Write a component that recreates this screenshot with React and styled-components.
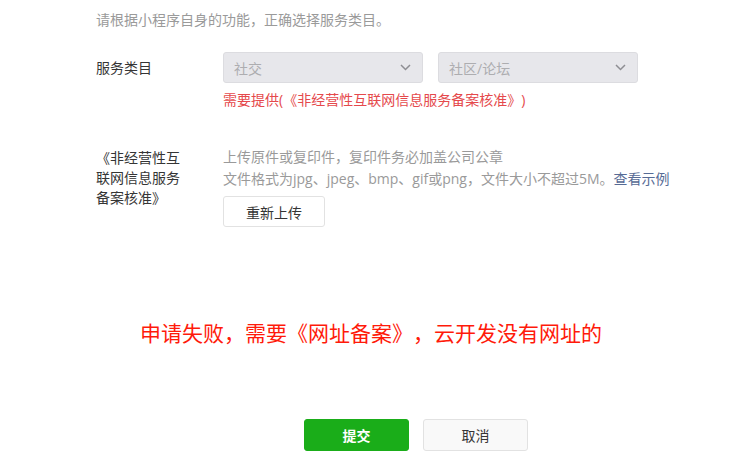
import React from "react";
import styled, { createGlobalStyle } from "styled-components";

const Global = createGlobalStyle`
  html, body { margin: 0; padding: 0; background: #fff; }
  body {
    font-family: "Open Sans", "Noto Sans CJK SC", sans-serif;
    font-size: 14px;
    color: #353535;
    text-spacing-trim: space-all;
  }
`;

const Page = styled.div`
  width: 742px;
  height: 463px;
  overflow: hidden;
  box-sizing: border-box;
  padding-top: 10px;
`;

const Form = styled.div`
  padding-left: 96px;
`;

const Intro = styled.p`
  margin: 0;
  font-size: 14px;
  line-height: 20px;
  color: #9a9a9a;
`;

const Row = styled.div`
  display: grid;
  grid-template-columns: 127px 1fr;
  margin-top: ${(p) => p.$top}px;
`;

const Label = styled.div`
  width: 90px;
  font-size: 14px;
  line-height: ${(p) => p.$lh}px;
  padding-top: ${(p) => p.$pt || 0}px;
  color: #353535;
`;

const Selects = styled.div`
  display: flex;
  gap: 15px;
`;

const Select = styled.div`
  box-sizing: border-box;
  width: 200px;
  height: 31px;
  display: flex;
  align-items: center;
  justify-content: space-between;
  padding: 0 11px 0 10px;
  background: #e7e7eb;
  border: 1px solid #dcdce0;
  border-radius: 3px;
  color: #adadb0;
  font-size: 14px;
`;

const Warn = styled.div`
  margin-top: 6px;
  line-height: 21px;
  font-size: 14px;
  color: #e5494c;
`;

const Desc = styled.div`
  font-size: 14px;
  line-height: 22px;
  color: #9a9a9a;
  margin-top: -1px;
`;

const Link = styled.a`
  color: #576b95;
  text-decoration: none;
`;

const Button = styled.button`
  box-sizing: border-box;
  font-family: inherit;
  font-size: 14px;
  border-radius: 3px;
  cursor: pointer;
  padding: 0;
  width: ${(p) => p.$w}px;
  height: ${(p) => p.$h}px;
  background: ${(p) => (p.$primary ? "#1aad19" : p.$soft ? "#f9f9f9" : "#fff")};
  border: 1px solid ${(p) => (p.$primary ? "#1aad19" : "#e2e2e2")};
  color: ${(p) => (p.$primary ? "#fff" : "#353535")};
  font-weight: ${(p) => (p.$primary ? 600 : 400)};
  text-spacing-trim: space-all;
`;

const UploadButton = styled(Button)`
  margin-top: 6px;
`;

const Notice = styled.div`
  margin-top: 91px;
  text-align: center;
  font-size: 21px;
  line-height: 30px;
  color: #ff1a0a;
`;

const Footer = styled.div`
  display: flex;
  gap: 14px;
  margin-top: 71px;
  padding-left: 304px;
`;

const Chevron = () => (
  <svg width="11" height="7" viewBox="0 0 11 7" fill="none">
    <polyline points="1,1 5.5,5.5 10,1" stroke="#8e8e93" strokeWidth="1.5" />
  </svg>
);

export default function App() {
  return (
    <Page>
      <Global />
      <Form>
        <Intro>请根据小程序自身的功能，正确选择服务类目。</Intro>
        <Row $top={22}>
          <Label $lh={31}>服务类目</Label>
          <div>
            <Selects>
              <Select>
                <span>社交</span>
                <Chevron />
              </Select>
              <Select>
                <span>社区/论坛</span>
                <Chevron />
              </Select>
            </Selects>
            <Warn>需要提供(《非经营性互联网信息服务备案核准》)</Warn>
          </div>
        </Row>
        <Row $top={37}>
          <Label $lh={20} $pt={1}>《非经营性互联网信息服务备案核准》</Label>
          <div>
            <Desc>
              上传原件或复印件，复印件务必加盖公司公章
              <br />
              文件格式为jpg、jpeg、bmp、gif或png，文件大小不超过5M。<Link href="#">查看示例</Link>
            </Desc>
            <UploadButton $w={102} $h={31}>重新上传</UploadButton>
          </div>
        </Row>
      </Form>
      <Notice>申请失败，需要《网址备案》，云开发没有网址的</Notice>
      <Footer>
        <Button $primary $w={105} $h={32}>提交</Button>
        <Button $soft $w={105} $h={32}>取消</Button>
      </Footer>
    </Page>
  );
}
